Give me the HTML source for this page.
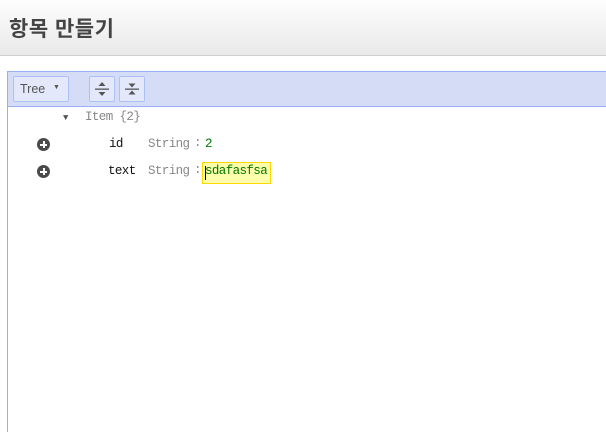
<!DOCTYPE html>
<html><head><meta charset="utf-8"><style>
*{margin:0;padding:0;box-sizing:border-box}
html,body{width:606px;height:432px;overflow:hidden}
body{background:#fff;font-family:"Liberation Sans","Noto Sans CJK KR",sans-serif;position:relative}
.hdr{position:absolute;left:0;top:0;width:606px;height:56px;background:linear-gradient(#fdfdfd,#e9e9e9);border-bottom:1px solid #cfcfcf}
.hdr h1{position:absolute;left:9px;top:13px;font-size:21px;font-weight:bold;color:#444;letter-spacing:0.5px}
.ed{position:absolute;left:7px;top:71px;width:620px;height:361px;border:1px solid #97b0f8;border-right:none;border-bottom:none}
.tb{position:absolute;left:0;top:0;width:100%;height:35px;background:#d5ddf6;border-bottom:1px solid #97b0f8}
.btn{position:absolute;top:4px;height:26px;border:1px solid #aec0f8;background:#e3e9fa;border-radius:2px}
.t{position:absolute;font-family:"Liberation Mono",monospace;font-size:12.5px;letter-spacing:-0.6px}
.plus{position:absolute;width:13px;height:13px;border-radius:50%;background:#4a4a4a}
.plus:before{content:"";position:absolute;left:3px;top:5.5px;width:7px;height:2px;background:#fff}
.plus:after{content:"";position:absolute;left:5.5px;top:3px;width:2px;height:7px;background:#fff}
</style></head><body>
<div class="hdr"><h1>항목 만들기</h1></div>
<div class="ed">
 <div class="tb">
  <div class="btn" style="left:5px;width:56px"><span style="position:absolute;left:6px;top:5px;font-size:12.5px;color:#555">Tree</span><span style="position:absolute;left:39px;top:7px;font-size:7px;color:#555">▼</span></div>
  <div class="btn" style="left:81px;width:26px"><svg width="24" height="24" viewBox="0 0 24 24"><path d="M12 5 L8.5 9 H15.5Z M12 19 L8.5 15 H15.5Z" fill="#555"/><rect x="5" y="11.5" width="14" height="1.3" fill="#555"/></svg></div>
  <div class="btn" style="left:111px;width:26px"><svg width="24" height="24" viewBox="0 0 24 24"><path d="M12 10.5 L8.5 6.5 H15.5Z M12 13.5 L8.5 17.5 H15.5Z" fill="#555"/><rect x="5" y="11.5" width="14" height="1.3" fill="#555"/></svg></div>
 </div>
</div>
<span class="t" style="left:63px;top:113px;font-size:9px;color:#555">▼</span>
<span class="t" style="left:85px;top:110px;color:#888">Item {2}</span>
<div class="plus" style="left:37px;top:138px"></div>
<span class="t" style="left:109px;top:137px;color:#111">id</span>
<span class="t" style="left:148px;top:137px;color:#888">String</span>
<span class="t" style="left:194px;top:136px;color:#888">:</span>
<span class="t" style="left:205px;top:137px;color:#007700">2</span>
<div class="plus" style="left:37px;top:165px"></div>
<span class="t" style="left:108px;top:164px;color:#111">text</span>
<span class="t" style="left:148px;top:164px;color:#888">String</span>
<span class="t" style="left:194px;top:163px;color:#888">:</span>
<div style="position:absolute;left:202px;top:162px;width:69px;height:22px;background:#ffffab;border:1px solid #ffd800"></div>
<div style="position:absolute;left:205px;top:166px;width:1px;height:14px;background:#000"></div>
<span class="t" style="left:205px;top:164px;color:#007700">sdafasfsa</span>
</body></html>
